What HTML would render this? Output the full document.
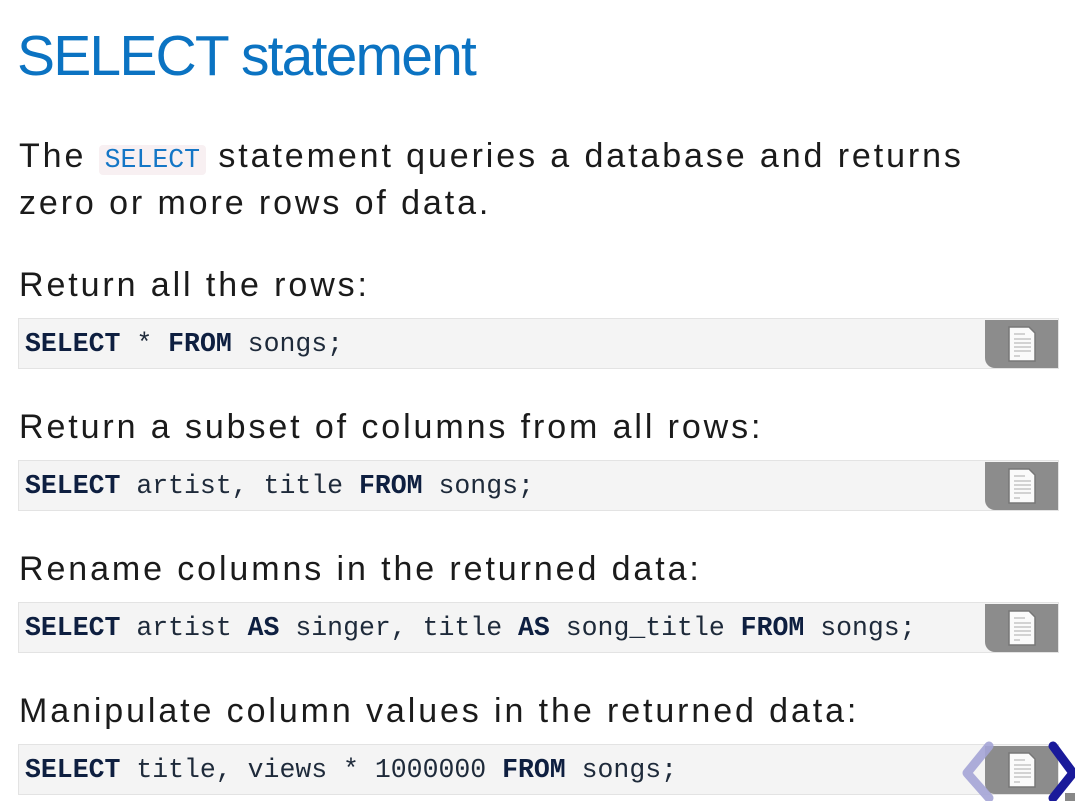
<!DOCTYPE html>
<html><head><meta charset="utf-8"><style>
body{margin:0;width:1075px;height:801px;overflow:hidden;background:#fff;position:relative;font-family:"Liberation Sans",sans-serif;}
.a{position:absolute;white-space:nowrap;}
h1{position:absolute;left:17px;top:18px;margin:0;font-weight:normal;font-size:57px;color:#0b73c2;letter-spacing:-1.8px;line-height:76px;}
.p{font-size:34px;color:#1b1b1b;letter-spacing:2.9px;line-height:47px;left:19px;}
.c{font-family:"Liberation Mono",monospace;font-size:26.5px;letter-spacing:0;background:#f8f0f2;color:#1476c6;padding:0 6px;border-radius:4px;}
.code{position:absolute;left:18px;width:1041px;height:51px;background:#f4f4f4;border:1px solid #e3e3e3;box-sizing:border-box;}
.code span.t{position:absolute;left:6px;top:10px;font-family:"Liberation Mono",monospace;font-size:26.5px;color:#1e2a3a;white-space:pre;}
b{color:#0e1f40}
.btn{position:absolute;right:0;top:1px;width:73px;height:48px;background:#8c8c8c;border-radius:0 0 0 10px;}
.btn svg{position:absolute;left:22px;top:6px}
</style></head><body>
<h1>SELECT statement</h1>
<div class="a p" style="top:133px">The <span class="c">SELECT</span> statement queries a database and returns</div>
<div class="a p" style="top:180px">zero or more rows of data.</div>
<div class="a p" style="top:262px">Return all the rows:</div>
<div class="code" style="top:318px"><span class="t"><b>SELECT</b> * <b>FROM</b> songs;</span><div class="btn"><svg width="30" height="36"><path d="M2 1H22L28 7V35H2Z" fill="#fafafa" stroke="#777" stroke-width="1.5"/><g stroke="#aaa" stroke-width="1"><line x1="7" y1="8" x2="18" y2="8"/><line x1="7" y1="13" x2="24" y2="13"/><line x1="7" y1="17" x2="24" y2="17"/><line x1="7" y1="21" x2="24" y2="21"/><line x1="7" y1="25" x2="24" y2="25"/><line x1="7" y1="30" x2="13" y2="30"/></g></svg></div></div>
<div class="a p" style="top:404px">Return a subset of columns from all rows:</div>
<div class="code" style="top:460px"><span class="t"><b>SELECT</b> artist, title <b>FROM</b> songs;</span><div class="btn"><svg width="30" height="36"><path d="M2 1H22L28 7V35H2Z" fill="#fafafa" stroke="#777" stroke-width="1.5"/><g stroke="#aaa" stroke-width="1"><line x1="7" y1="8" x2="18" y2="8"/><line x1="7" y1="13" x2="24" y2="13"/><line x1="7" y1="17" x2="24" y2="17"/><line x1="7" y1="21" x2="24" y2="21"/><line x1="7" y1="25" x2="24" y2="25"/><line x1="7" y1="30" x2="13" y2="30"/></g></svg></div></div>
<div class="a p" style="top:546px">Rename columns in the returned data:</div>
<div class="code" style="top:602px"><span class="t"><b>SELECT</b> artist <b>AS</b> singer, title <b>AS</b> song_title <b>FROM</b> songs;</span><div class="btn"><svg width="30" height="36"><path d="M2 1H22L28 7V35H2Z" fill="#fafafa" stroke="#777" stroke-width="1.5"/><g stroke="#aaa" stroke-width="1"><line x1="7" y1="8" x2="18" y2="8"/><line x1="7" y1="13" x2="24" y2="13"/><line x1="7" y1="17" x2="24" y2="17"/><line x1="7" y1="21" x2="24" y2="21"/><line x1="7" y1="25" x2="24" y2="25"/><line x1="7" y1="30" x2="13" y2="30"/></g></svg></div></div>
<div class="a p" style="top:688px">Manipulate column values in the returned data:</div>
<div class="code" style="top:744px"><span class="t"><b>SELECT</b> title, views * 1000000 <b>FROM</b> songs;</span><div class="btn"><svg width="30" height="36"><path d="M2 1H22L28 7V35H2Z" fill="#fafafa" stroke="#777" stroke-width="1.5"/><g stroke="#aaa" stroke-width="1"><line x1="7" y1="8" x2="18" y2="8"/><line x1="7" y1="13" x2="24" y2="13"/><line x1="7" y1="17" x2="24" y2="17"/><line x1="7" y1="21" x2="24" y2="21"/><line x1="7" y1="25" x2="24" y2="25"/><line x1="7" y1="30" x2="13" y2="30"/></g></svg></div></div>
<svg class="a" style="left:955px;top:740px" width="120" height="61">
<path d="M34 6L12 33L34 58" fill="none" stroke="#a4a4d6" stroke-width="9" stroke-linecap="round" stroke-linejoin="round" opacity="0.9"/>
<path d="M98 6L118 33L98 58" fill="none" stroke="#1a1a9a" stroke-width="9" stroke-linecap="round" stroke-linejoin="round"/>
<rect x="110" y="53" width="10" height="8" fill="#888"/>
</svg>
</body></html>
